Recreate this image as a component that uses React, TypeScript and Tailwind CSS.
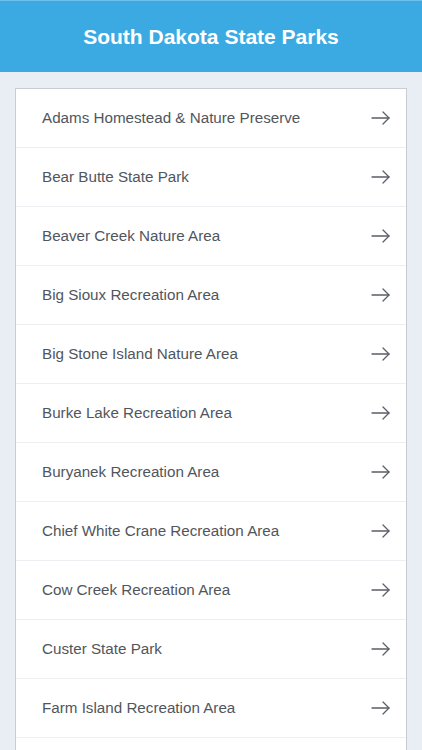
import React from "react";

const parks = [
  "Adams Homestead & Nature Preserve",
  "Bear Butte State Park",
  "Beaver Creek Nature Area",
  "Big Sioux Recreation Area",
  "Big Stone Island Nature Area",
  "Burke Lake Recreation Area",
  "Buryanek Recreation Area",
  "Chief White Crane Recreation Area",
  "Cow Creek Recreation Area",
  "Custer State Park",
  "Farm Island Recreation Area",
];

const Arrow = () => (
  <svg width="20" height="14" viewBox="0 0 20 14" fill="none" stroke="#5a5f66" strokeWidth="1.3" strokeLinecap="round" strokeLinejoin="round">
    <path d="M1 7h17" />
    <path d="M12 1l6 6-6 6" />
  </svg>
);

export default function App() {
  return (
    <div className="h-[750px] w-[422px] overflow-hidden bg-[#e9eef5] font-['Liberation_Sans',Arial,sans-serif]">
      <div className="flex h-[72px] items-center justify-center border-t border-[#6cc0ec] bg-[#3caae2]">
        <h1 className="text-[21px] font-bold text-white">South Dakota State Parks</h1>
      </div>
      <div className="px-[15px] pt-[16px]">
        <div className="border border-[#c9cdd3] bg-white">
          {parks.map((p) => (
            <div key={p} className="flex h-[59px] items-center justify-between border-b border-[#eceef1] pl-[26px] pr-[15px]">
              <span className="text-[15.2px] text-[#51565d]">{p}</span>
              <Arrow />
            </div>
          ))}
          <div className="h-[59px]" />
        </div>
      </div>
    </div>
  );
}
